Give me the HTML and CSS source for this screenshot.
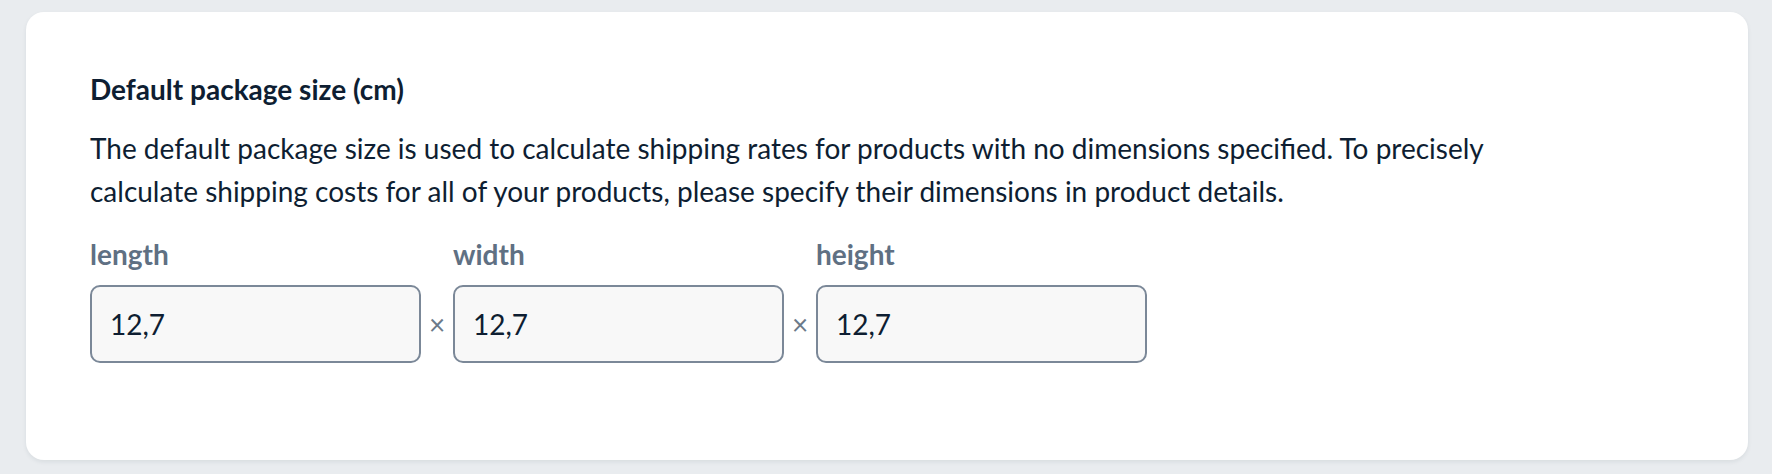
FILE: index.html
```html
<!DOCTYPE html>
<html lang="en">
<head>
<meta charset="utf-8">
<title>Default package size</title>
<link rel="stylesheet" href="styles.css">
</head>
<body>
<section class="card">
  <h2 class="title">Default package size (cm)</h2>
  <p class="desc">The default package size is used to calculate shipping rates for products with no dimensions specified. To precisely calculate shipping costs for all of your products, please specify their dimensions in product details.</p>
  <div class="dims">
    <div class="field">
      <label class="label" for="len">length</label>
      <input class="input" id="len" type="text" value="12,7">
    </div>
    <span class="times">×</span>
    <div class="field">
      <label class="label" for="wid">width</label>
      <input class="input" id="wid" type="text" value="12,7">
    </div>
    <span class="times">×</span>
    <div class="field">
      <label class="label" for="hei">height</label>
      <input class="input" id="hei" type="text" value="12,7">
    </div>
  </div>
</section>
</body>
</html>
```
FILE: styles.css
```css
html, body {
  margin: 0;
  padding: 0;
}
body {
  background: #e9ecef;
  font-family: Lato, "Open Sans", "Liberation Sans", sans-serif;
  color: #0e1e32;
  padding: 12px 24px 14px 26px;
  height: 474px;
  box-sizing: border-box;
}
.card {
  background: #ffffff;
  border-radius: 18px;
  box-shadow: 0 2px 4px rgba(30, 45, 60, 0.08);
  padding: 59px 64px 0 64px;
  height: 448px;
  box-sizing: border-box;
}
.title {
  margin: 0;
  font-size: 28px;
  line-height: 36px;
  font-weight: 700;
  color: #0e1e32;
}
.desc {
  margin: 19.6px 0 0 0;
  max-width: 1440px;
  font-size: 28px;
  line-height: 43.4px;
  font-weight: 400;
}
.dims {
  margin-top: 22.6px;
  display: flex;
  align-items: flex-end;
}
.field {
  display: flex;
  flex-direction: column;
  gap: 12.8px;
}
.label {
  font-size: 28px;
  line-height: 36px;
  font-weight: 700;
  color: #5f7083;
}
.input {
  box-sizing: border-box;
  width: 331px;
  height: 78px;
  margin: 0;
  padding: 0 18px;
  border: 2px solid #7b8898;
  border-radius: 10px;
  background: #f8f8f8;
  font-family: Lato, "Open Sans", "Liberation Sans", sans-serif;
  font-size: 28px;
  color: #0e1e32;
  outline: none;
}
.times {
  width: 32px;
  height: 78px;
  display: flex;
  align-items: center;
  justify-content: center;
  font-size: 28px;
  color: #6b7a8a;
}
```
